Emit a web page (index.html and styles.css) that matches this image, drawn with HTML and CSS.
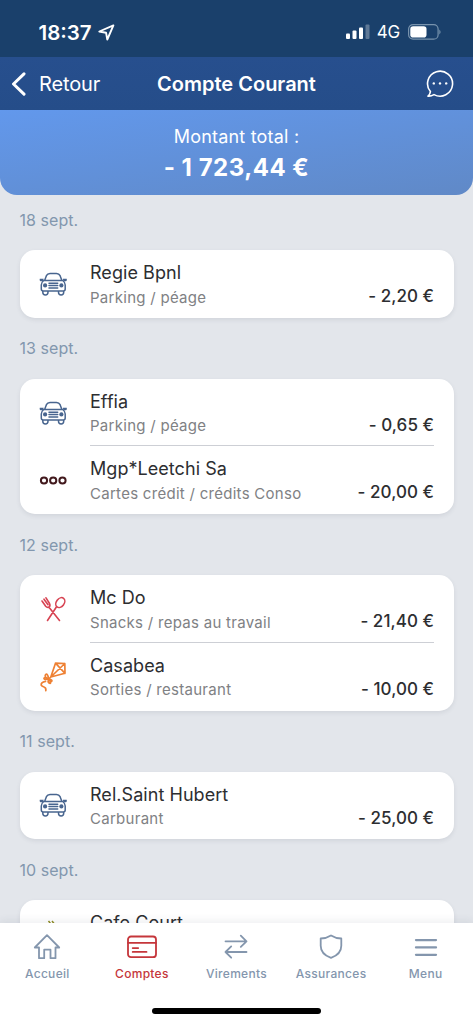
FILE: index.html
```html
<!DOCTYPE html>
<html lang="fr">
<head>
<meta charset="utf-8">
<title>Compte Courant</title>
<link rel="stylesheet" href="styles.css">
</head>
<body>
<svg width="0" height="0" class="defs">
  <symbol id="car" viewBox="0 0 28 24">
    <path d="M5.800 8 7.400 3.700Q8.500 1.500 11 1.500h6.500q2.500 0 3.600 2.200L22.700 8M4.700 8.500h19.100Q26.200 10.500 26.200 13v4q0 2-2 2H4.300q-2 0-2-2v-4Q2.300 10.500 4.700 8.500zM3.800 19v1.300a2.600 2.600 0 0 0 5.200 0V19M19.500 19v1.300a2.600 2.600 0 0 0 5.200 0V19M10 11.300h8.700M10 13.600h8.700M10 15.900h8.700" fill="none" stroke="currentColor" stroke-width="1.500" stroke-linecap="round" stroke-linejoin="round"/>
    <path d="M.8 6.700h3.900L4 9.200H1.500Q.3 8.500.8 6.700zM27.700 6.700h-3.900l.7 2.500H27q1.200-.7.7-2.500z" fill="currentColor"/>
    <circle cx="6.100" cy="13.400" r="2.100" fill="currentColor"/><circle cx="22.400" cy="13.400" r="2.100" fill="currentColor"/>
  </symbol>
</svg>
<div class="screen">
  <header class="status">
    <div class="clock"><span class="time">18:37</span>
      <svg width="17" height="17" viewBox="0 0 17 17"><path d="M15.400 1.400 1.300 7.500l6.800 1.300 1.200 6.700z" fill="none" stroke="#fff" stroke-width="1.900" stroke-linejoin="round"/></svg>
    </div>
    <div class="signals">
      <svg width="24" height="16" viewBox="0 0 24 16" fill="#fff"><rect x="0" y="9.500" width="4" height="5.500" rx="1"/><rect x="6.500" y="6.500" width="4" height="8.500" rx="1"/><rect x="13" y="3.500" width="4" height="11.500" rx="1"/><rect x="19.500" y=".5" width="4" height="14.500" rx="1" opacity=".3"/></svg>
      <span class="network">4G</span>
      <svg width="34" height="17" viewBox="0 0 34 17"><rect x=".6" y=".6" width="29.500" height="14.600" rx="4.500" fill="none" stroke="#7893ad" stroke-width="1.200"/><rect x="2.300" y="2.300" width="16.200" height="11.200" rx="2.800" fill="#fff"/><path d="M31.300 5.400q2.600 2.500 0 5z" fill="#7893ad"/></svg>
    </div>
  </header>
  <nav class="topbar">
    <span class="back"><svg width="16" height="24" viewBox="0 0 16 24"><path d="M13 1.800 2.500 12 13 22.200" fill="none" stroke="#fff" stroke-width="3" stroke-linecap="round" stroke-linejoin="round"/></svg><span class="back-label">Retour</span></span>
    <h1 class="title">Compte Courant</h1>
    <svg class="chat" width="30" height="30" viewBox="0 0 30 30"><path d="M5.400 22.600A12.500 12.500 0 1 1 9 25.600Q6 27.400 3 27.100 5.200 25.200 5.400 22.600z" fill="none" stroke="#fff" stroke-width="1.600" stroke-linejoin="round"/><g fill="#fff"><circle cx="8.800" cy="14.400" r="1.200"/><circle cx="15" cy="14.400" r="1.200"/><circle cx="21.200" cy="14.400" r="1.200"/></g></svg>
  </nav>
  <section class="total"><div class="total-label">Montant total :</div><div class="total-value">- 1 723,44 €</div></section>
  <main class="list">
    <h2 class="date">18 sept.</h2>
    <div class="card">
      <div class="row"><svg class="icon navy"><use href="#car"/></svg><div class="body"><div><div class="name">Regie Bpnl</div><div class="category">Parking / péage</div></div><div class="amount">- 2,20 €</div></div></div>
    </div>
    <h2 class="date">13 sept.</h2>
    <div class="card">
      <div class="row"><svg class="icon navy"><use href="#car"/></svg><div class="body"><div><div class="name">Effia</div><div class="category">Parking / péage</div></div><div class="amount">- 0,65 €</div></div></div>
      <div class="row"><svg class="icon" viewBox="0 0 28 24" fill="none" stroke="#42191d" stroke-width="2"><circle cx="5" cy="12.500" r="3.100"/><circle cx="14.200" cy="12.500" r="3.100"/><circle cx="23.500" cy="12.500" r="3.100"/></svg><div class="body"><div><div class="name">Mgp*Leetchi Sa</div><div class="category">Cartes crédit / crédits Conso</div></div><div class="amount">- 20,00 €</div></div></div>
    </div>
    <h2 class="date">12 sept.</h2>
    <div class="card">
      <div class="row"><svg class="icon" viewBox="0 0 28 24" fill="none" stroke="#d74352" stroke-width="1.600" stroke-linecap="round" stroke-linejoin="round"><path d="M3 4 6.700 9.200Q8 10.800 10 10.200 11.600 8.700 10.500 6.500L7 .8M5 2.200l4 5.500M10 10.200 20.500 23.500M17.200 10.200 8.500 23.500"/><ellipse cx="21.300" cy="5.600" rx="3.900" ry="5.400" transform="rotate(37 21.300 5.600)"/></svg><div class="body"><div><div class="name">Mc Do</div><div class="category">Snacks / repas au travail</div></div><div class="amount">- 21,40 €</div></div></div>
      <div class="row"><svg class="icon kite" viewBox="0 0 28 30" fill="none" stroke="#ee8134" stroke-width="1.700" stroke-linecap="round" stroke-linejoin="round"><path d="M16.500 1.200 25.800 1.500 26 11.300 11.800 15zM16.500 1.200 26 11.300M25.800 1.500 11.800 15l-2 2M9.800 17Q8.500 10.500 6.500 12.700 5 15 9.800 17 12.500 21.500 11 21.300 8 21 9.800 17M9.800 17Q5 14.500 5 16.600 5.500 18 9.800 17 14 18 12.500 19.500 10.500 19.500 9.800 17M6.500 19.300Q1.800 20.200 2.200 23.200q.5 1.200 2.800 1.800 2.300.7 1.800 3.700"/></svg><div class="body"><div><div class="name">Casabea</div><div class="category">Sorties / restaurant</div></div><div class="amount">- 10,00 €</div></div></div>
    </div>
    <h2 class="date">11 sept.</h2>
    <div class="card">
      <div class="row"><svg class="icon navy"><use href="#car"/></svg><div class="body"><div><div class="name">Rel.Saint Hubert</div><div class="category">Carburant</div></div><div class="amount">- 25,00 €</div></div></div>
    </div>
    <h2 class="date">10 sept.</h2>
    <div class="card">
      <div class="row"><svg class="icon" viewBox="0 0 28 24" fill="none" stroke="#8d8b20" stroke-width="1.500"><path d="m9.500-.9 1.800 2.100v2M13-.9l1.800 2.100v2"/></svg><div class="body"><div><div class="name">Cafe Court</div></div></div></div>
    </div>
  </main>
  <footer class="tabbar">
    <div class="tabs">
      <a class="tab"><svg viewBox="0 0 32 28"><path d="M3.800 14.500 16 2.200l12.200 12.300h-3.700v10.700h-5v-8.500h-6.300v8.500H8V14.500z"/></svg><span>Accueil</span></a>
      <a class="tab active"><svg viewBox="0 0 32 28"><rect x="2" y="3.500" width="28" height="20.700" rx="3"/><path d="M2 9.900h28M6.700 15.100h5.500M6.700 18.900h13.800"/></svg><span>Comptes</span></a>
      <a class="tab"><svg viewBox="0 0 32 28"><path d="M5.500 8.300h21M20.800 2.700l5.700 5.600-5.700 5.600M26.500 19H5.500M11.200 13.400 5.500 19l5.700 5.700"/></svg><span>Virements</span></a>
      <a class="tab"><svg viewBox="0 0 32 28"><path d="M16 2.500Q20.500 5.400 26.300 5.500v7.200c0 5.700-4.300 10-10.300 12.200C10 22.700 5.700 18.400 5.700 12.700V5.500Q11.500 5.400 16 2.500z"/></svg><span>Assurances</span></a>
      <a class="tab"><svg viewBox="0 0 32 28" class="menu"><path d="M6 7.100h20M6 14.400h20M6 21.800h20"/></svg><span>Menu</span></a>
    </div>
    <div class="home-indicator"></div>
  </footer>
</div>
</body>
</html>
```
FILE: styles.css
```css
* { box-sizing: border-box; }
body { margin: 0; font-family: Inter, sans-serif; }
.defs { position: absolute; }
.screen { width: 473px; height: 1024px; display: flex; flex-direction: column; overflow: hidden; background: #e3e6eb; }
.status { flex: none; height: 57px; padding: 7px 31px 0 38.500px; display: flex; align-items: center; justify-content: space-between; background: #1a406b; color: #fff; }
.clock, .signals { display: flex; align-items: center; }
.clock { gap: 6px; }
.time { font-size: 20.500px; font-weight: 600; letter-spacing: 0; }
.network { font-size: 17px; margin: 0 8px 0 7px; letter-spacing: -0.2px; }
.topbar { flex: none; height: 53px; padding: 0 18px 0 11px; display: grid; grid-template-columns: 1fr auto 1fr; align-items: center; background: linear-gradient(#274f8e, #254d89); color: #fff; }
.back { display: flex; align-items: center; gap: 12px; font-size: 20px; letter-spacing: -0.15px; }
.title { margin: 0; padding-left: 7px; font-size: 20px; font-weight: 600; line-height: 26px; }
.chat { justify-self: end; }
.total { flex: none; height: 85px; padding-top: 14.500px; border-radius: 0 0 17px 17px; background: linear-gradient(172deg, #6089c7, #6298ec); background: linear-gradient(172deg, #6298ec, #6089c7); color: #fff; text-align: center; }
.total-label { font-size: 18px; line-height: 24px; letter-spacing: 0.2px; }
.total-value { font-size: 24px; line-height: 30px; margin-top: 4.500px; font-weight: 700; letter-spacing: 0.5px; }
.list { flex: 1; min-height: 0; overflow: hidden; padding: 0 19.500px; margin-top: -5.700px; }
.date { height: 60.700px; margin: 0; padding-top: 19.500px; color: #8297ae; font-size: 16px; line-height: 22px; font-weight: 400; letter-spacing: 0.050px; }
.card { background: #fff; border-radius: 15px; box-shadow: 0 2px 4px rgba(60, 70, 90, .1); }
.row { height: 67.900px; display: flex; align-items: center; padding: 0 19.500px; }
.icon { flex: none; width: 28px; height: 24px; margin-right: 23px; overflow: visible; }
.navy { color: #48658f; }
.kite { height: 30px; }
.body { flex: 1; height: 100%; display: flex; justify-content: space-between; padding-top: 11px; border-bottom: 1.500px solid #cdcfd5; }
.row:last-child .body { border-bottom-color: transparent; }
.name { color: #2d2e31; font-size: 18px; line-height: 24px; letter-spacing: 0.050px; }
.category { color: #808184; font-size: 15px; line-height: 20px; margin-top: 2.500px; letter-spacing: 0.280px; }
.amount { color: #2d2e31; font-size: 17px; line-height: 24px; padding-top: 23px; font-weight: 500; letter-spacing: 0.050px; }
.tabbar { flex: none; position: relative; height: 101px; background: #fff; box-shadow: 0 -2px 8px rgba(60, 70, 90, .09); }
.tabs { display: grid; grid-template-columns: repeat(5, 1fr); height: 85px; padding-top: 9.500px; }
.tab { display: flex; flex-direction: column; align-items: center; gap: 4.500px; color: #8496ad; font-size: 12px; line-height: 18px; font-weight: 500; letter-spacing: 0.3px; }
.tab svg { width: 32px; height: 28px; fill: none; stroke: currentColor; stroke-width: 1.800px; stroke-linecap: round; stroke-linejoin: round; }
.tab .menu { stroke-width: 2.300px; }
.tab.active { color: #c5363b; }
.home-indicator { width: 169px; height: 6px; border-radius: 3px; background: #000; margin: 0 auto; }
```
